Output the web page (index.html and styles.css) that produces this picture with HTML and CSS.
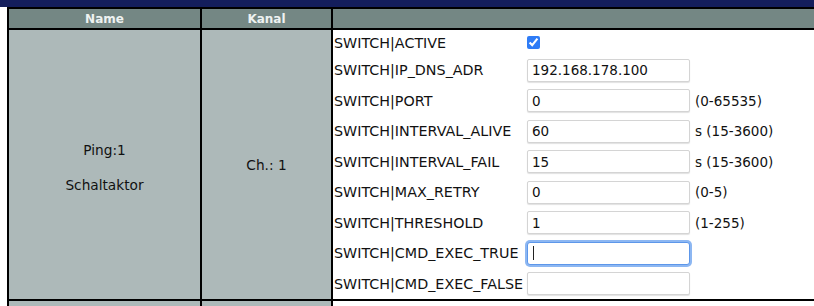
FILE: index.html
```html
<!DOCTYPE html>
<html lang="de">
<head>
  <meta charset="UTF-8" />
  <title>Ping Kanal</title>
  <link rel="stylesheet" href="styles.css">
</head>
<body>

  <div class="topbar"></div>

  <table class="devices">
    <colgroup>
      <col class="col-name" />
      <col class="col-channel" />
      <col />
    </colgroup>
    <tr class="head">
      <th>Name</th>
      <th>Kanal</th>
      <th></th>
    </tr>
    <tr class="device">
      <td class="name">Ping:1<br><br>Schaltaktor</td>
      <td class="channel">Ch.: 1</td>
      <td class="params">
        <table class="paramlist">
          <tr class="first">
            <td class="label">SWITCH|ACTIVE</td>
            <td class="field"><input type="checkbox" checked /></td>
            <td class="range"></td>
          </tr>
          <tr>
            <td class="label">SWITCH|IP_DNS_ADR</td>
            <td class="field"><input type="text" value="192.168.178.100" /></td>
            <td class="range"></td>
          </tr>
          <tr>
            <td class="label">SWITCH|PORT</td>
            <td class="field"><input type="text" value="0" /></td>
            <td class="range">(0-65535)</td>
          </tr>
          <tr>
            <td class="label">SWITCH|INTERVAL_ALIVE</td>
            <td class="field"><input type="text" value="60" /></td>
            <td class="range">s (15-3600)</td>
          </tr>
          <tr>
            <td class="label">SWITCH|INTERVAL_FAIL</td>
            <td class="field"><input type="text" value="15" /></td>
            <td class="range">s (15-3600)</td>
          </tr>
          <tr>
            <td class="label">SWITCH|MAX_RETRY</td>
            <td class="field"><input type="text" value="0" /></td>
            <td class="range">(0-5)</td>
          </tr>
          <tr>
            <td class="label">SWITCH|THRESHOLD</td>
            <td class="field"><input type="text" value="1" /></td>
            <td class="range">(1-255)</td>
          </tr>
          <tr>
            <td class="label">SWITCH|CMD_EXEC_TRUE</td>
            <td class="field"><input type="text" class="focused" value="" /></td>
            <td class="range"></td>
          </tr>
          <tr>
            <td class="label">SWITCH|CMD_EXEC_FALSE</td>
            <td class="field"><input type="text" value="" /></td>
            <td class="range"></td>
          </tr>
        </table>
      </td>
    </tr>
    <tr class="device next">
      <td></td>
      <td></td>
      <td class="params"></td>
    </tr>
  </table>

</body>
</html>
```

FILE: styles.css
```css
:root {
  --navy: #141e5c;
  --head: #748784;
  --cell: #adb9b9;
  --font: 'DejaVu Sans', Verdana, sans-serif;
}

body {
  margin: 0;
  overflow: hidden;
  font-family: var(--font);
  font-size: 14px;
  color: #111;
  background: #fff;
}

.topbar {
  height: 7px;
  background: var(--navy);
}

.devices {
  border-collapse: collapse;
  table-layout: fixed;
  width: 1000px;
  margin-left: 7px;
  border: 2px solid #000;
  border-top: none;
}

.col-name {
  width: 193px;
}

.col-channel {
  width: 131px;
}

.devices > tbody > tr > th,
.devices > tbody > tr > td {
  border: 2px solid #000;
  padding: 0;
}

.head > th {
  height: 19px;
  background: var(--head);
  color: #eef2f1;
  font-size: 12px;
  font-weight: bold;
  text-align: center;
}

.device > td {
  background: var(--cell);
  text-align: center;
  vertical-align: middle;
  font-size: 13.7px;
}

.device > .name {
  line-height: 17.5px;
  padding-top: 7px;
}

.device > .params {
  background: #fff;
  text-align: left;
  vertical-align: top;
}

.next > td {
  height: 20px;
}

.paramlist {
  border-collapse: collapse;
  width: 100%;
  font-size: 14.3px;
}

.paramlist td {
  padding: 0;
  height: 30.5px;
  white-space: nowrap;
  text-align: left;
  vertical-align: middle;
}

.paramlist .first td {
  height: 25px;
}

.paramlist .label {
  width: 193px;
  padding-left: 1px;
}

.paramlist .field {
  width: 163px;
}

.paramlist .range {
  padding-left: 5px;
  font-size: 13.5px;
}

.field input[type="text"] {
  box-sizing: border-box;
  width: 163px;
  height: 23px;
  margin: 0;
  padding: 0 4px;
  border: 1px solid #d4d4d4;
  border-radius: 2px;
  box-shadow: 0 1px 1px rgba(0, 0, 0, 0.12);
  font-family: var(--font);
  font-size: 13.5px;
  color: #111;
  display: block;
}

.field input.focused {
  border: 1px solid #5d97ea;
  box-shadow: 0 0 0 2px #8db7f2;
  border-radius: 3px;
  background: linear-gradient(#222, #222) no-repeat 5px 50% / 1px 14px, #fff;
}

.field input[type="checkbox"] {
  width: 13px;
  height: 13px;
  margin: 0;
  accent-color: #2f7cf6;
  display: block;
}
```
